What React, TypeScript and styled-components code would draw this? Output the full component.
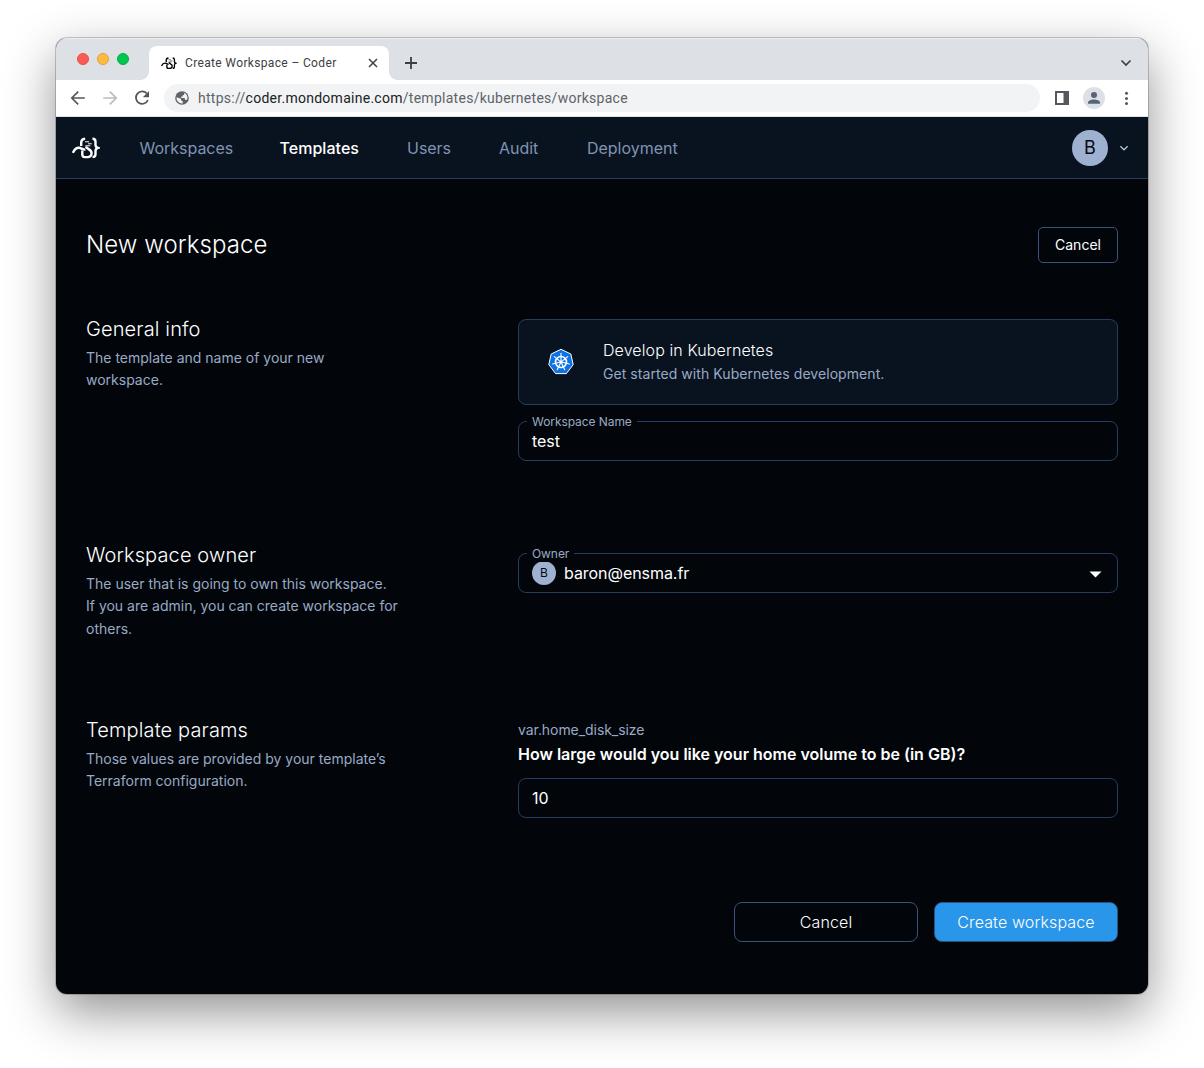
import React from "react";
import styled, { createGlobalStyle } from "styled-components";

const ink = "#02060b";
const panel = "#09131f";
const line = "#263d60";
const muted = "#9aaac4";
const avatarBlue = "#9eb1d0";

const GlobalStyle = createGlobalStyle`
  * { box-sizing: border-box; }
  body { margin: 0; background: #fff; overflow: hidden; font-family: Inter, "Liberation Sans", sans-serif; font-weight: 300; }
`;

const Desktop = styled.div`
  width: 1204px;
  height: 1068px;
  padding: 38px 56px 74px;
  overflow: hidden;
`;

const Window = styled.div`
  height: 956px;
  border-radius: 11px;
  overflow: hidden;
  background: ${ink};
  box-shadow: 0 0 0 1px rgba(0, 0, 0, 0.2), 0 18px 50px rgba(0, 0, 0, 0.43);
`;

const TabStrip = styled.div`
  height: 42px;
  display: flex;
  align-items: center;
  padding: 0 14px 0 21px;
  background: #dde0e5;
  box-shadow: inset 0 1px 0 #eceef0;
`;

const Lights = styled.div`
  display: flex;
  gap: 8px;
  width: 72px;
`;

const Light = styled.span<{ $fill: string; $edge: string }>`
  width: 12px;
  height: 12px;
  border-radius: 50%;
  background: ${(p) => p.$fill};
  border: 1px solid ${(p) => p.$edge};
`;

const Tab = styled.div`
  position: relative;
  align-self: flex-end;
  width: 240px;
  height: 34px;
  display: flex;
  align-items: center;
  padding: 0 10px 0 12px;
  border-radius: 8px 8px 0 0;
  background: #fff;
  &::before,
  &::after {
    content: "";
    position: absolute;
    bottom: 0;
    width: 8px;
    height: 8px;
  }
  &::before {
    left: -8px;
    background: radial-gradient(circle at 0 0, transparent 7.5px, #fff 8px);
  }
  &::after {
    right: -8px;
    background: radial-gradient(circle at 100% 0, transparent 7.5px, #fff 8px);
  }
`;

const TabTitle = styled.span`
  flex: 1;
  margin-left: 8px;
  font: 12px/16px Roboto, sans-serif;
  letter-spacing: 0.35px;
  color: #3c4043;
  white-space: nowrap;
`;

const StripActions = styled.div`
  flex: 1;
  display: flex;
  align-items: center;
  justify-content: space-between;
  padding-top: 8px;
`;

const Spacer = styled.div`
  flex: 1;
`;

const Glyph = styled.svg`
  display: block;
  flex: none;
`;

const Toolbar = styled.div`
  height: 37px;
  display: flex;
  align-items: center;
  padding: 0 14px;
  background: #fff;
  border-bottom: 1px solid #dfe1e4;
`;

const NavButtons = styled.div`
  display: flex;
  gap: 16px;
  width: 94px;
`;

const AddressBar = styled.div`
  width: 876px;
  height: 28px;
  display: flex;
  align-items: center;
  padding-left: 10px;
  border-radius: 14px;
  background: #f1f3f4;
`;

const Url = styled.span`
  margin-left: 8px;
  font: 14px/20px Roboto, sans-serif;
  letter-spacing: 0.27px;
  color: #5f6368;
  white-space: nowrap;
`;

const UrlHost = styled.span`
  color: #202124;
`;

const ToolbarActions = styled.div`
  display: flex;
  align-items: center;
  margin-left: 14px;
`;

const ProfileButton = styled.span`
  width: 22px;
  height: 22px;
  margin: 0 13px 0 13px;
  display: grid;
  place-items: center;
  border-radius: 50%;
  background: #dde0e6;
`;

const AppBar = styled.header`
  height: 62px;
  display: flex;
  align-items: center;
  padding: 0 18px 0 15.5px;
  background: ${panel};
  border-bottom: 1px solid ${line};
`;

const NavLinks = styled.nav`
  display: flex;
  gap: 48px;
  margin-left: 40px;
`;

const NavLink = styled.a<{ $active?: boolean; $width: number }>`
  width: ${(p) => p.$width}px;
  font-size: 16px;
  line-height: 24px;
  letter-spacing: ${(p) => (p.$active ? 0.04 : -0.02)}px;
  font-weight: ${(p) => (p.$active ? 500 : 400)};
  color: ${(p) => (p.$active ? "#fff" : "#8093b3")};
  white-space: nowrap;
`;

const Avatar = styled.span<{ $size: number }>`
  flex: none;
  width: ${(p) => p.$size}px;
  height: ${(p) => p.$size}px;
  display: grid;
  place-items: center;
  border-radius: 50%;
  background: ${avatarBlue};
  color: #05090f;
  font-size: ${(p) => p.$size / 2}px;
  font-weight: 400;
  line-height: 1;
`;

const UserMenu = styled.div`
  display: flex;
  align-items: center;
  gap: 10px;
`;

const Page = styled.main`
  padding: 48px 30px 0;
`;

const PageHeader = styled.div`
  height: 36px;
  display: flex;
  align-items: center;
  justify-content: space-between;
`;

const PageTitle = styled.h1`
  margin: 0;
  font-size: 24px;
  line-height: 36px;
  font-weight: 300;
  letter-spacing: 0.08px;
  color: #fff;
`;

const Button = styled.button<{ $size: "small" | "large"; $primary?: boolean }>`
  width: ${(p) => (p.$size === "small" ? 80 : 184)}px;
  height: ${(p) => (p.$size === "small" ? 36 : 40)}px;
  padding: 0 0 ${(p) => (p.$size === "small" ? 1 : 0)}px;
  border: 1px solid ${(p) => (p.$primary ? "#28527f" : "#3a5279")};
  border-radius: ${(p) => (p.$size === "small" ? 5 : 8)}px;
  background: ${(p) => (p.$primary ? "#2996ea" : ink)};
  color: #fff;
  font-family: inherit;
  font-weight: ${(p) => (p.$size === "small" ? 400 : 300)};
  font-size: ${(p) => (p.$size === "small" ? 14 : 16)}px;
  letter-spacing: ${(p) => (p.$size === "small" ? 0 : 0.13)}px;
`;

const Section = styled.section<{ $gap: number; $height: number }>`
  display: flex;
  justify-content: space-between;
  height: ${(p) => p.$height}px;
  margin-top: ${(p) => p.$gap}px;
`;

const Summary = styled.div`
  width: 312px;
`;

const SectionTitle = styled.h2`
  margin: -3px 0 5px;
  font-size: 20px;
  line-height: 26px;
  font-weight: 300;
  letter-spacing: 0.13px;
  color: #fff;
`;

const SectionText = styled.p`
  margin: 0;
  font-size: 14px;
  font-weight: 400;
  line-height: 22.4px;
  letter-spacing: 0;
  color: ${muted};
  white-space: nowrap;
`;

const Fields = styled.div`
  width: 600px;
`;

const TemplateCard = styled.div`
  height: 86px;
  display: flex;
  align-items: center;
  padding-left: 28px;
  gap: 28px;
  margin-bottom: 16px;
  border: 1px solid ${line};
  border-radius: 8px;
  background: ${panel};
`;

const CardBody = styled.div`
  padding-bottom: 2px;
`;

const CardTitle = styled.div`
  font-size: 16px;
  line-height: 25px;
  letter-spacing: 0.1px;
  color: #fff;
`;

const CardText = styled.div`
  font-size: 14px;
  font-weight: 400;
  line-height: 22px;
  letter-spacing: 0.06px;
  color: ${muted};
`;

const Field = styled.div`
  position: relative;
  height: 40px;
  display: flex;
  align-items: center;
  gap: 8px;
  padding: 0 15px 0 13px;
  border: 1px solid ${line};
  border-radius: 8px;
  color: #fff;
  font-size: 16px;
  line-height: 24px;
`;

const FieldLabel = styled.label`
  position: absolute;
  left: 8px;
  top: -8px;
  padding: 0 5px;
  background: ${ink};
  color: ${muted};
  font-size: 12px;
  font-weight: 400;
  line-height: 16px;
  letter-spacing: -0.07px;
`;

const Value = styled.span`
  flex: 1;
  font-weight: 400;
  letter-spacing: -0.05px;
`;

const OwnerRow = styled.div`
  padding-top: 8px;
`;

const VarName = styled.div`
  margin-top: -1px;
  font-size: 14px;
  font-weight: 400;
  line-height: 22px;
  letter-spacing: -0.06px;
  color: ${muted};
`;

const Question = styled.div`
  margin: 0 0 11px;
  font-size: 16px;
  line-height: 26px;
  font-weight: 600;
  color: #fff;
`;

const Footer = styled.div`
  display: flex;
  justify-content: flex-end;
  gap: 16px;
  margin-top: 84px;
`;

const Logo = ({ size, color }: { size: number; color: string }) => (
  <Glyph width={size} height={(size * 22) / 28} viewBox="0.5 0 28 22" fill="none" stroke={color} strokeWidth="2.4">
    <path d="M1.4 15.8C2.8 12.6 4.9 10.8 7.5 10.8c2.2 0 3.5 2.3 6.4 1.7" />
    <path d="M9.7 9V5.8C9.7 3.4 10.9 2 13.6 1.8" />
    <path d="M10.8 13.4v4.2c0 1.8.8 2.5 2.3 2.5h2.5c3 0 4.5-1.7 4.5-4.2 0-3.8-5.1-3.6-5.6-6.4" />
    <path d="M21 1.8c2.3 0 3 .8 3 2.8v3.1c0 1.8.6 2.6 2.4 3.2-1.8.6-2.4 1.4-2.4 3.2v3.1c0 2.1-.8 2.9-3 2.9" />
    <path d="M13.6 4.8h4M16.6 6.8h3.6M13.8 8.8h5" strokeWidth="1" />
  </Glyph>
);

const spokes = [0, 1, 2, 3, 4, 5, 6].map((i) => (i * 360) / 7);

const Kubernetes = () => (
  <Glyph width="28" height="28" viewBox="0 0 28 28">
    <path d="M14 1.3 23.8 6 26.2 16.6 19.4 25.6H8.6L1.8 16.6 4.2 6Z" fill="#0b73e5" stroke="#fff" strokeWidth="1" strokeLinejoin="round" />
    <g fill="none" stroke="#fff">
      <circle cx="14" cy="14" r="5.5" strokeWidth="1.6" />
      {spokes.map((a) => (
        <path key={a} d="M14 12.5V5.4" strokeWidth="1.1" strokeLinecap="round" transform={`rotate(${a} 14 14)`} />
      ))}
    </g>
    <circle cx="14" cy="14" r="1.4" fill="#fff" />
  </Glyph>
);

const navItems = [
  { label: "Workspaces", width: 92 },
  { label: "Templates", width: 79.5, active: true },
  { label: "Users", width: 44 },
  { label: "Audit", width: 40 },
  { label: "Deployment", width: 91 },
];

export default function App() {
  return (
    <Desktop>
      <GlobalStyle />
      <Window>
        <TabStrip>
          <Lights>
            <Light $fill="#fe5a55" $edge="#e2504a" />
            <Light $fill="#febb40" $edge="#e0a13a" />
            <Light $fill="#00c750" $edge="#0bac3c" />
          </Lights>
          <Tab>
            <Logo size={16} color="#000" />
            <TabTitle>Create Workspace – Coder</TabTitle>
            <Glyph width="12" height="12" viewBox="0 0 12 12" stroke="#3c4043" strokeWidth="1.5">
              <path d="m2 2 8 8M10 2l-8 8" />
            </Glyph>
          </Tab>
          <StripActions>
            <Glyph width="44" height="14" viewBox="0 0 44 14" stroke="#3c4043" strokeWidth="1.8">
              <path d="M22 1v12M16 7h12" />
            </Glyph>
            <Glyph width="16" height="16" viewBox="0 0 16 16" fill="none" stroke="#3c4043" strokeWidth="1.7">
              <path d="m3.5 5.5 4.5 4.5 4.5-4.5" />
            </Glyph>
          </StripActions>
        </TabStrip>
        <Toolbar>
          <NavButtons>
            <Glyph width="16" height="16" viewBox="0 0 16 16" fill="none" stroke="#54585d" strokeWidth="1.7">
              <path d="M14.8 8H2M8.2 1.6 1.8 8l6.4 6.4" />
            </Glyph>
            <Glyph width="16" height="16" viewBox="0 0 16 16" fill="none" stroke="#babcbe" strokeWidth="1.7">
              <path d="M1.2 8H14M7.8 1.6 14.2 8l-6.4 6.4" />
            </Glyph>
            <Glyph width="16" height="16" viewBox="0 0 16 16">
              <path d="M12.8 3.5A6.2 6.2 0 1 0 13.9 10" fill="none" stroke="#54585d" strokeWidth="1.8" />
              <path d="M15 1v6.2H8.8Z" fill="#54585d" />
            </Glyph>
          </NavButtons>
          <AddressBar>
            <Glyph width="16" height="16" viewBox="0 0 16 16">
              <circle cx="8" cy="8" r="6.8" fill="#5f6368" />
              <path d="M2.5 7.2 7 8.8v1.5l1.7 1v2.1C5.4 13.8 2.5 11.3 2.5 8ZM10 2.7c2.4 1 3.8 3.3 3.5 5.8L12.6 10h-1.3L10.5 8.1H7.2V6.6h1.6V5h1.4Z" fill="#f1f3f4" />
            </Glyph>
            <Url>
              https://<UrlHost>coder.mondomaine.com</UrlHost>/templates/kubernetes/workspace
            </Url>
          </AddressBar>
          <ToolbarActions>
            <Glyph width="16" height="16" viewBox="0 0 16 16">
              <path d="M1 1h14v14H1Zm2 2v10h6.5V3Z" fill="#54585d" fillRule="evenodd" />
            </Glyph>
            <ProfileButton>
              <Glyph width="14" height="14" viewBox="0 0 14 14" fill="#56647a">
                <circle cx="7" cy="4" r="3" />
                <path d="M1 12.8v-1.2C1 9.6 4.3 8.4 7 8.4s6 1.2 6 3.2v1.2Z" />
              </Glyph>
            </ProfileButton>
            <Glyph width="16" height="16" viewBox="0 0 16 16" fill="#54585d">
              <circle cx="8.5" cy="3.2" r="1.5" />
              <circle cx="8.5" cy="8.4" r="1.5" />
              <circle cx="8.5" cy="13.5" r="1.5" />
            </Glyph>
          </ToolbarActions>
        </Toolbar>

        <AppBar>
          <Logo size={28} color="#fff" />
          <NavLinks>
            {navItems.map((item) => (
              <NavLink key={item.label} $active={item.active} $width={item.width}>
                {item.label}
              </NavLink>
            ))}
          </NavLinks>
          <Spacer />
          <UserMenu>
            <Avatar $size={36}>B</Avatar>
            <Glyph width="12" height="12" viewBox="0 0 12 12" fill="none" stroke="#b3c3dc" strokeWidth="1.3">
              <path d="m2.4 4.3 3.6 3.5 3.6-3.5" />
            </Glyph>
          </UserMenu>
        </AppBar>

        <Page>
          <PageHeader>
            <PageTitle>New workspace</PageTitle>
            <Button $size="small">Cancel</Button>
          </PageHeader>

          <Section $gap={56} $height={142}>
            <Summary>
              <SectionTitle>General info</SectionTitle>
              <SectionText>
                The template and name of your new
                <br />
                workspace.
              </SectionText>
            </Summary>
            <Fields>
              <TemplateCard>
                <Kubernetes />
                <CardBody>
                  <CardTitle>Develop in Kubernetes</CardTitle>
                  <CardText>Get started with Kubernetes development.</CardText>
                </CardBody>
              </TemplateCard>
              <Field>
                <FieldLabel>Workspace Name</FieldLabel>
                <Value>test</Value>
              </Field>
            </Fields>
          </Section>

          <Section $gap={84} $height={91}>
            <Summary>
              <SectionTitle>Workspace owner</SectionTitle>
              <SectionText>
                The user that is going to own this workspace.
                <br />
                If you are admin, you can create workspace for
                <br />
                others.
              </SectionText>
            </Summary>
            <Fields>
              <OwnerRow>
                <Field>
                  <FieldLabel>Owner</FieldLabel>
                  <Avatar $size={24}>B</Avatar>
                  <Value>baron@ensma.fr</Value>
                  <Glyph width="14" height="10" viewBox="0 0 14 10" fill="#fff">
                    <path d="M1.5 3.5h12l-6 6Z" />
                  </Glyph>
                </Field>
              </OwnerRow>
            </Fields>
          </Section>

          <Section $gap={84} $height={98}>
            <Summary>
              <SectionTitle>Template params</SectionTitle>
              <SectionText>
                Those values are provided by your template’s
                <br />
                Terraform configuration.
              </SectionText>
            </Summary>
            <Fields>
              <VarName>var.home_disk_size</VarName>
              <Question>How large would you like your home volume to be (in GB)?</Question>
              <Field>
                <Value>10</Value>
              </Field>
            </Fields>
          </Section>

          <Footer>
            <Button $size="large">Cancel</Button>
            <Button $size="large" $primary>
              Create workspace
            </Button>
          </Footer>
        </Page>
      </Window>
    </Desktop>
  );
}
